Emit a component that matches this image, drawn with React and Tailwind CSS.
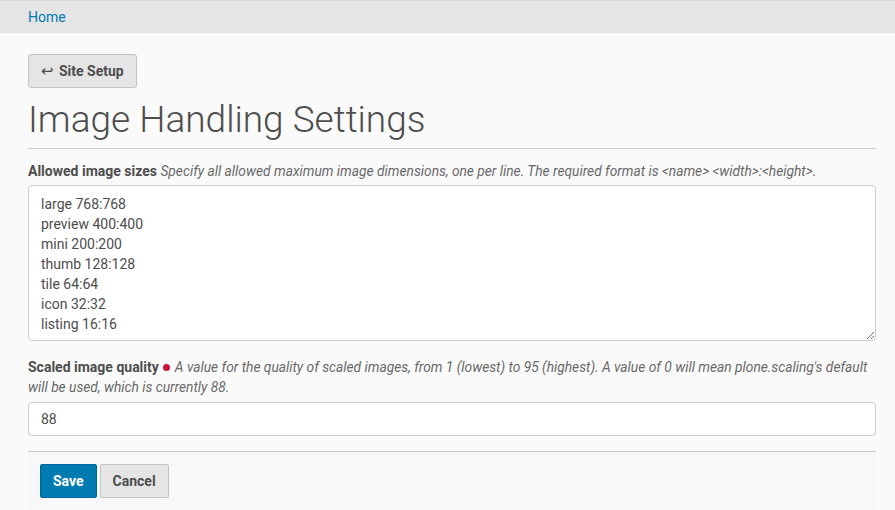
export default function App() {
  const sizes = "large 768:768\npreview 400:400\nmini 200:200\nthumb 128:128\ntile 64:64\nicon 32:32\nlisting 16:16";
  return (
    <div className="min-h-[510px] bg-[#fafafa] text-[#4d4d4d]" style={{ fontFamily: "Roboto, 'Liberation Sans', sans-serif" }}>
      <div className="h-[33px] bg-[#e6e5e6] border-t border-[#dcdcdc] px-[28px] flex items-center">
        <a className="text-[14px] text-[#007bb1]" href="#">Home</a>
      </div>
      <div className="pl-[28px] pt-[21px] w-[876px]">
        <button className="h-[34px] px-[12px] bg-[#e5e5e5] border border-[#c4c4c4] rounded-[3px] text-[14px] font-bold text-[#4d4d4d] flex items-center gap-[5px]">
          <span className="text-[15px] font-normal">↩</span>Site Setup
        </button>
        <h1 className="mt-[10px] text-[37px] leading-[44px] font-light text-[#4d4d4d] pb-[6px] border-b border-[#cccccc]">Image Handling Settings</h1>
        <div className="mt-[12px] text-[14px] leading-[20px]">
          <span className="font-bold">Allowed image sizes</span>{" "}
          <span className="italic text-[13.75px] text-[#696969]">Specify all allowed maximum image dimensions, one per line. The required format is &lt;name&gt; &lt;width&gt;:&lt;height&gt;.</span>
        </div>
        <textarea
          readOnly
          defaultValue={sizes}
          className="mt-[4px] block w-full h-[156px] bg-white border border-[#cccccc] rounded-[4px] px-[12px] pt-[8px] text-[14px] leading-[20px] text-[#4d4d4d] outline-none resize-y"
        />
        <div className="mt-[16px] text-[14px] leading-[20px]">
          <span className="font-bold">Scaled image quality</span>{" "}
          <span className="inline-block w-[7px] h-[7px] rounded-full bg-[#c4183c] align-middle mx-[1px] mb-[2px]"></span>{" "}
          <span className="italic text-[13.75px] text-[#696969]">A value for the quality of scaled images, from 1 (lowest) to 95 (highest). A value of 0 will mean plone.scaling's default will be used, which is currently 88.</span>
        </div>
        <input
          readOnly
          defaultValue="88"
          className="mt-[5px] block w-full h-[34px] bg-white border border-[#cccccc] rounded-[4px] px-[12px] text-[14px] text-[#4d4d4d] outline-none"
        />
        <div className="mt-[15px] border-t border-[#cccccc] bg-[#f8f8fa] px-[12px] pt-[12px] pb-[14px] flex gap-[3px]">
          <button className="h-[34px] px-[12px] bg-[#007bb1] border border-[#00669a] rounded-[2px] text-[14px] font-bold text-white">Save</button>
          <button className="h-[34px] px-[12px] bg-[#e5e5e5] border border-[#c4c4c4] rounded-[2px] text-[14px] font-bold text-[#4d4d4d]">Cancel</button>
        </div>
      </div>
    </div>
  );
}
